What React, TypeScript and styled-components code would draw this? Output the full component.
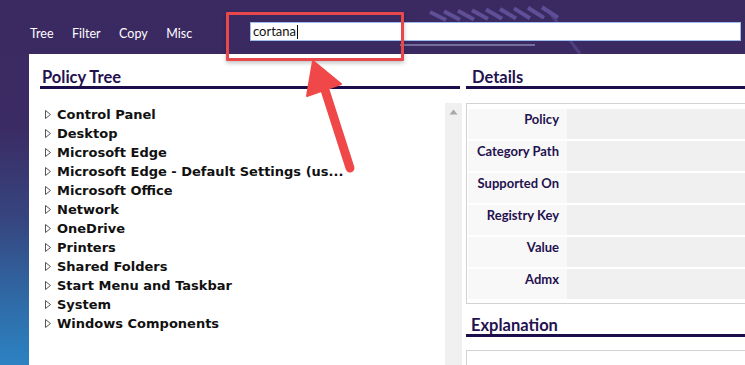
import React from "react";
import styled, { createGlobalStyle } from "styled-components";

const GlobalStyle = createGlobalStyle`
  html, body {
    margin: 0;
    padding: 0;
  }
  body {
    font-family: Lato, "Noto Sans", sans-serif;
  }
`;

const Page = styled.div`
  position: relative;
  width: 745px;
  height: 365px;
  overflow: hidden;
  background: linear-gradient(
    to bottom,
    #3b2a62 0%,
    #3b2b64 35%,
    #36457f 60%,
    #2f6aa6 82%,
    #2c82c2 100%
  );
`;

const TopBar = styled.div`
  position: relative;
  display: flex;
  align-items: center;
  height: 42px;
  padding: 12px 4px 0 30px;
  background: #3b2a62;
`;

const Stripes = styled.svg`
  position: absolute;
  left: 0;
  top: 0;
  pointer-events: none;
`;

const Menu = styled.nav`
  display: flex;
  gap: 18.5px;
  width: 220px;
  margin-top: 2px;
  flex-shrink: 0;
`;

const MenuItem = styled.span`
  color: #ffffff;
  font-family: Lato, "Noto Sans", sans-serif;
  font-size: 12.5px;
  line-height: 16px;
`;

const SearchBox = styled.div`
  position: relative;
  flex: 1;
  height: 15px;
  margin-top: -3px;
  padding: 1px 2px;
  background: #ffffff;
  border: 1px solid #9dbdf0;
  font-family: Lato, "Noto Sans", sans-serif;
  font-size: 13px;
  line-height: 15px;
  color: #111111;
  display: flex;
  align-items: center;
`;

const Caret = styled.span`
  display: inline-block;
  width: 1px;
  height: 14px;
  margin-left: 1px;
  background: #000000;
`;

const Main = styled.div`
  display: flex;
  margin-left: 29px;
  width: 760px;
  height: 311px;
  background: #ffffff;
`;

const LeftColumn = styled.div`
  display: flex;
  flex-direction: column;
  width: 422px;
  padding-left: 11px;
`;

const RightColumn = styled.div`
  display: flex;
  flex-direction: column;
  width: 300px;
  margin-left: 4px;
`;

const Heading = styled.h2<{ $indent: number; $top: number; $trim?: number }>`
  margin: 0 ${(p) => p.$trim || 0}px 0 0;
  padding: ${(p) => p.$top}px 0 0 ${(p) => p.$indent}px;
  font-family: Lato, "Noto Sans", sans-serif;
  font-size: 16.5px;
  font-weight: 700;
  line-height: 18px;
  color: #24114f;
  border-bottom: 3px solid #1c0c4a;
`;

const TreeArea = styled.div`
  display: flex;
  flex: 1;
  margin-top: 14px;
`;

const TreeList = styled.ul`
  flex: 1;
  list-style: none;
  margin: 0;
  padding: 2px 0 0 5px;
`;

const TreeRow = styled.li`
  display: flex;
  align-items: center;
  gap: 6px;
  height: 19px;
  font-family: "DejaVu Sans", Verdana, sans-serif;
  font-size: 13px;
  font-weight: 700;
  color: #111111;
  white-space: nowrap;
`;

const Scrollbar = styled.div`
  display: flex;
  justify-content: center;
  width: 17px;
  padding-top: 6px;
  background: #f0f0f0;
`;

const DetailsTable = styled.div`
  display: grid;
  row-gap: 2px;
  margin-top: 14px;
  padding: 5px 0 4px 1px;
  border: 1px solid #d2d2d2;
  background: #ffffff;
`;

const DetailRow = styled.div`
  display: grid;
  grid-template-columns: 99px 1fr;
  height: 30px;
`;

const Label = styled.div`
  padding: 2px 8px 0 0;
  background: #f8f8f8;
  text-align: right;
  font-family: Lato, "Noto Sans", sans-serif;
  font-size: 13px;
  font-weight: 700;
  line-height: 16px;
  color: #24114f;
`;

const Value = styled.div`
  background: #f0f0f0;
`;

const ExplanationBox = styled.div`
  flex: 1;
  margin-top: 13px;
  border: 1px solid #d2d2d2;
  border-bottom: none;
`;

const Annotation = styled.svg`
  position: absolute;
  left: 0;
  top: 0;
  pointer-events: none;
`;

const Highlight = styled.div`
  position: absolute;
  left: 226px;
  top: 12px;
  width: 172px;
  height: 43px;
  border: 3px solid #e8484b;
  border-radius: 1px;
  box-shadow: 0 2px 4px rgba(0, 0, 0, 0.25);
  pointer-events: none;
`;

const treeItems = [
  "Control Panel",
  "Desktop",
  "Microsoft Edge",
  "Microsoft Edge - Default Settings (us...",
  "Microsoft Office",
  "Network",
  "OneDrive",
  "Printers",
  "Shared Folders",
  "Start Menu and Taskbar",
  "System",
  "Windows Components",
];

const detailLabels = [
  "Policy",
  "Category Path",
  "Supported On",
  "Registry Key",
  "Value",
  "Admx",
];

const Expander = () => (
  <svg width="6" height="9" viewBox="0 0 6 9">
    <polygon points="0.5,0.5 5.5,4.5 0.5,8.5" fill="none" stroke="#555" strokeWidth="1" />
  </svg>
);

export default function App() {
  return (
    <Page>
      <GlobalStyle />
      <TopBar>
        <Stripes width="745" height="54" viewBox="0 0 745 54">
          {[0, 1, 2, 3, 4, 5, 6, 7, 8].map((i) => (
            <line
              key={i}
              x1={430 + i * 14}
              y1={12 - i * 0.6}
              x2={446 + i * 14}
              y2={20 - i * 0.3}
              stroke="#6a5ca8"
              strokeWidth="4"
              opacity="0.75"
            />
          ))}
          <line x1="548" y1="10" x2="580" y2="54" stroke="#5a4d96" strokeWidth="3" opacity="0.6" />
          <line x1="400" y1="45" x2="535" y2="45" stroke="#cfd8f5" strokeWidth="1" opacity="0.8" />
        </Stripes>
        <Menu>
          <MenuItem>Tree</MenuItem>
          <MenuItem>Filter</MenuItem>
          <MenuItem>Copy</MenuItem>
          <MenuItem>Misc</MenuItem>
        </Menu>
        <SearchBox>
          cortana
          <Caret />
        </SearchBox>
      </TopBar>
      <Main>
        <LeftColumn>
          <Heading $indent={2} $top={14} $trim={2}>
            Policy Tree
          </Heading>
          <TreeArea>
            <TreeList>
              {treeItems.map((item) => (
                <TreeRow key={item}>
                  <Expander />
                  {item}
                </TreeRow>
              ))}
            </TreeList>
            <Scrollbar>
              <svg width="9" height="6" viewBox="0 0 9 6">
                <polygon points="4.5,0.5 8.5,5.5 0.5,5.5" fill="#a8a8a8" />
              </svg>
            </Scrollbar>
          </TreeArea>
        </LeftColumn>
        <RightColumn>
          <Heading $indent={6} $top={14}>
            Details
          </Heading>
          <DetailsTable>
            {detailLabels.map((label) => (
              <DetailRow key={label}>
                <Label>{label}</Label>
                <Value />
              </DetailRow>
            ))}
          </DetailsTable>
          <Heading $indent={5} $top={12}>
            Explanation
          </Heading>
          <ExplanationBox />
        </RightColumn>
      </Main>
      <Highlight />
      <Annotation width="745" height="365" viewBox="0 0 745 365">
        <line x1="325" y1="90" x2="350" y2="168" stroke="#f04848" strokeWidth="9" strokeLinecap="round" />
        <polygon points="313,61 307,96 341,84" fill="#f04848" stroke="#f04848" strokeWidth="2" strokeLinejoin="round" />
      </Annotation>
    </Page>
  );
}
